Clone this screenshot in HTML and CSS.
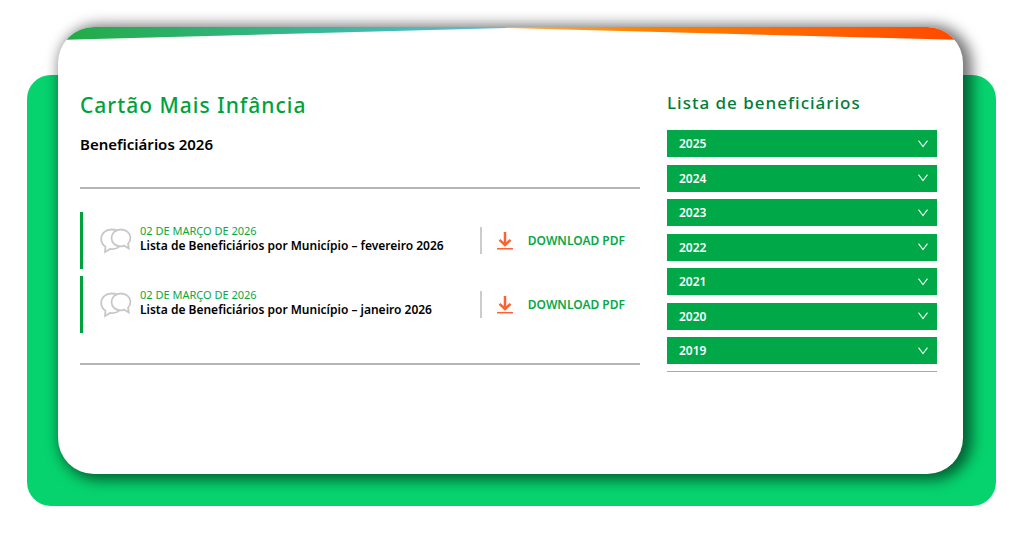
FILE: index.html
```html
<!DOCTYPE html>
<html lang="pt-BR">
<head>
<meta charset="utf-8">
<meta name="viewport" content="width=device-width, initial-scale=1">
<title>Cartão Mais Infância</title>
<link rel="stylesheet" href="styles.css">
</head>
<body>
<svg class="sprite" aria-hidden="true">
  <symbol id="chat" viewBox="0 0 32 26">
    <path d="M17 2.800C15.300 1.800 13.500 1.500 11.500 1.500C5.800 1.500 1.200 5.500 1.200 11C1.200 14.200 2.800 16.900 5.400 18.700L5.100 24L10.400 20.800C13.400 21.400 16.800 20.700 19.500 18.300"/>
    <path d="M20.800 1.500C15.600 1.500 11.500 5.200 11.500 10C11.500 14.800 15.600 18.300 20.800 18.300C22.100 18.300 23.200 18.100 24.300 17.700L28.800 20.400L28.100 15.700C29.600 14.200 30.400 12.300 30.400 10C30.400 5.200 26.200 1.500 20.800 1.500Z"/>
  </symbol>
  <symbol id="download" viewBox="0 0 16 18">
    <path class="arrow" d="M8 0V13M2.500 7.800L8 13L13.500 7.800"/>
    <path class="tray" d="M0 16.700H16"/>
  </symbol>
  <symbol id="chevron" viewBox="0 0 10 8">
    <path d="M.5 .6L5 6.600L9.500 .6"/>
  </symbol>
</svg>
<div class="stage">
  <div class="backdrop"></div>
  <main class="card">
    <svg class="ribbon" viewBox="0 0 905 13" preserveAspectRatio="none" aria-hidden="true">
      <defs>
        <linearGradient id="cool"><stop offset="0" stop-color="#22aa43"/><stop offset=".5" stop-color="#35b58a"/><stop offset="1" stop-color="#55c0dc"/></linearGradient>
        <linearGradient id="warm"><stop offset="0" stop-color="#ffb040"/><stop offset=".3" stop-color="#ff8200"/><stop offset="1" stop-color="#ff4800"/></linearGradient>
      </defs>
      <path fill="url(#cool)" d="M0 0H448V1L0 13Z"/>
      <path fill="url(#warm)" d="M448 0H905V13L448 1Z"/>
    </svg>
    <div class="content">
      <section class="listing">
        <h1 class="title">Cartão Mais Infância</h1>
        <h2 class="subtitle">Beneficiários 2026</h2>
        <ul class="documents">
          <li class="document">
            <svg class="chat-icon" aria-hidden="true"><use href="#chat"/></svg>
            <div class="details">
              <time class="date" datetime="2026-03-02">02 DE MARÇO DE 2026</time>
              <h3 class="name">Lista de Beneficiários por Município – fevereiro 2026</h3>
            </div>
            <a class="download" href="#"><svg class="download-icon" aria-hidden="true"><use href="#download"/></svg>DOWNLOAD PDF</a>
          </li>
          <li class="document">
            <svg class="chat-icon" aria-hidden="true"><use href="#chat"/></svg>
            <div class="details">
              <time class="date" datetime="2026-03-02">02 DE MARÇO DE 2026</time>
              <h3 class="name">Lista de Beneficiários por Município – janeiro 2026</h3>
            </div>
            <a class="download" href="#"><svg class="download-icon" aria-hidden="true"><use href="#download"/></svg>DOWNLOAD PDF</a>
          </li>
        </ul>
      </section>
      <aside class="archive">
        <h2 class="archive-title">Lista de beneficiários</h2>
        <div class="years">
          <button class="year" type="button">2025<svg class="chevron" aria-hidden="true"><use href="#chevron"/></svg></button>
          <button class="year" type="button">2024<svg class="chevron" aria-hidden="true"><use href="#chevron"/></svg></button>
          <button class="year" type="button">2023<svg class="chevron" aria-hidden="true"><use href="#chevron"/></svg></button>
          <button class="year" type="button">2022<svg class="chevron" aria-hidden="true"><use href="#chevron"/></svg></button>
          <button class="year" type="button">2021<svg class="chevron" aria-hidden="true"><use href="#chevron"/></svg></button>
          <button class="year" type="button">2020<svg class="chevron" aria-hidden="true"><use href="#chevron"/></svg></button>
          <button class="year" type="button">2019<svg class="chevron" aria-hidden="true"><use href="#chevron"/></svg></button>
        </div>
      </aside>
    </div>
  </main>
</div>
</body>
</html>
```
FILE: styles.css
```css
* { box-sizing: border-box; }
body {
  margin: 0;
  background: #fff;
  color: #000;
  font-family: "Noto Sans", "Open Sans", sans-serif;
}
h1, h2, h3, ul { margin: 0; padding: 0; }
.sprite { display: none; }

.stage {
  display: grid;
  min-height: 100vh;
  padding: 27px 28px 30px 27px;
}
.backdrop, .card { grid-area: 1 / 1; }
.backdrop {
  margin-top: 48px;
  border-radius: 24px;
  background: #06d36e;
}
.card {
  margin: 0 33px 32px 31px;
  border-radius: 36px;
  overflow: hidden;
  background: #fff;
  box-shadow: 5px 2px 14px 4px rgba(0, 0, 0, .55);
}
.ribbon { display: block; width: 100%; height: 13px; }

.content {
  display: grid;
  grid-template-columns: minmax(0, 56fr) minmax(0, 27fr);
  gap: 27px;
  padding: 50px 26px 48px 22px;
}
.title {
  color: #00a23c;
  font-size: 21px;
  line-height: 30px;
  font-weight: 500;
  letter-spacing: 1px;
}
.subtitle {
  margin-top: 12px;
  font-size: 15px;
  line-height: 24px;
  font-weight: 600;
}
.documents {
  display: grid;
  gap: 7px;
  margin-top: 31px;
  padding: 23px 0 30px;
  border: solid #b5b5b5;
  border-width: 2px 0;
  list-style: none;
}
.document {
  display: flex;
  align-items: center;
  padding: 0 15px 0 17px;
  border-left: 3px solid #00a23c;
  min-height: 57px;
}
.chat-icon {
  flex: none;
  width: 32px;
  height: 26px;
  fill: none;
  stroke: #c8c8c8;
  stroke-width: 1.800;
}
.details { flex: 1; margin-left: 8px; padding-bottom: 4px; }
.date {
  display: block;
  color: #0aa748;
  font-size: 11px;
  line-height: 15px;
}
.name {
  font-size: 12px;
  line-height: 16px;
  font-weight: 600;
}
.download {
  display: flex;
  align-items: center;
  gap: 15px;
  height: 27px;
  padding-left: 15px;
  border-left: 2px solid #ccc;
  color: #0aa748;
  font-size: 12px;
  font-weight: 600;
  text-decoration: none;
}
.download-icon {
  width: 16px;
  height: 18px;
  fill: none;
  stroke: #ff6230;
}
.arrow { stroke-width: 2.500; }
.tray { stroke-width: 1.500; }

.archive-title {
  color: #007d38;
  font-size: 17px;
  line-height: 26px;
  font-weight: 500;
  letter-spacing: 1px;
}
.years {
  display: grid;
  align-content: space-between;
  min-height: 242px;
  margin-top: 14px;
  padding-bottom: 7px;
  border-bottom: 1px solid #aaa;
}
.year {
  display: flex;
  align-items: center;
  justify-content: space-between;
  height: 27px;
  padding: 0 9px 0 12px;
  border: 0;
  background: #00a848;
  color: #fff;
  font-family: inherit;
  font-size: 12px;
  font-weight: 600;
}
.chevron {
  width: 10px;
  height: 8px;
  fill: none;
  stroke: #e5faec;
  stroke-width: 1.200;
}
```
